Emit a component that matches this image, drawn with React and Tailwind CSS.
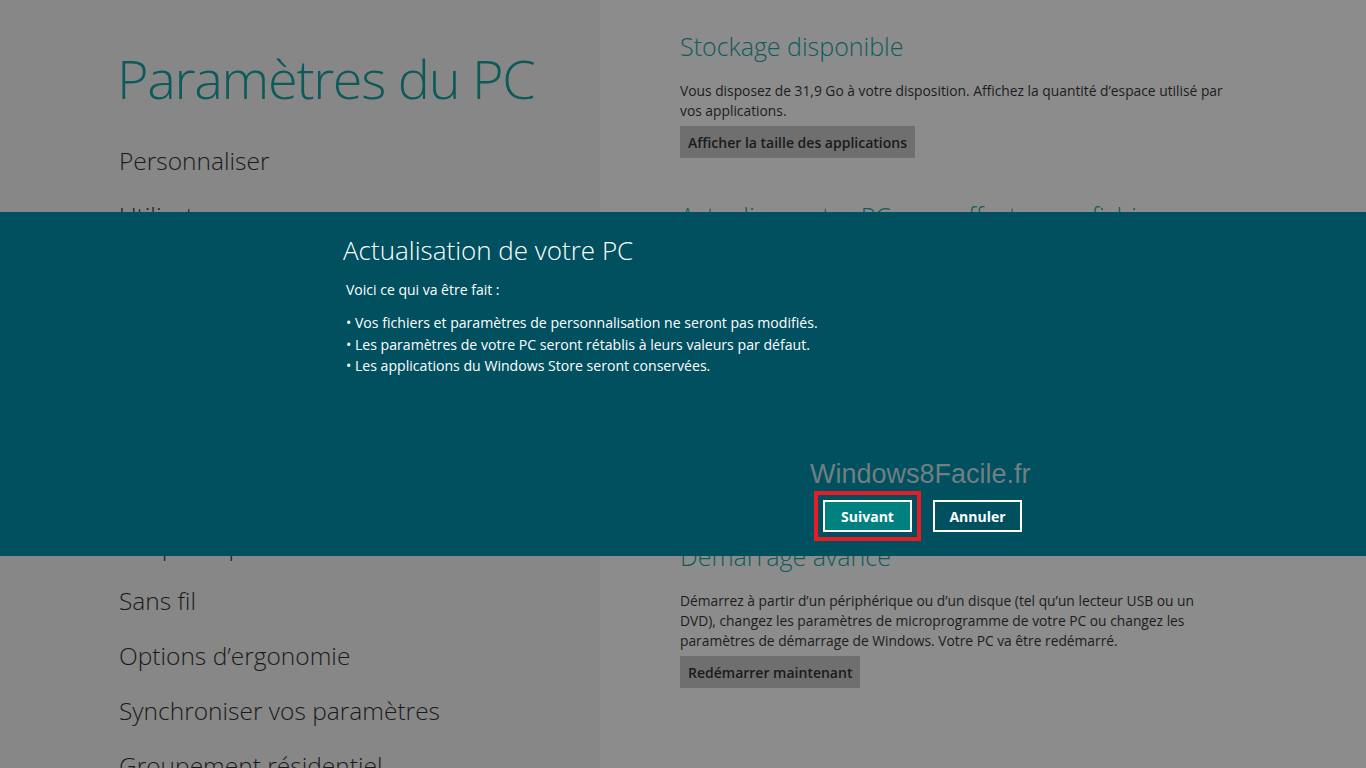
import React from 'react';

const navItems = [
  'Personnaliser',
  'Utilisateurs',
  'Notifications',
  'Rechercher',
  'Partager',
  'Général',
  'Confidentialité',
  'Périphériques',
  'Sans fil',
  'Options d’ergonomie',
  'Synchroniser vos paramètres',
  'Groupement résidentiel',
  'Windows Update',
];

const sections = [
  {
    title: 'Stockage disponible',
    lines: [
      'Vous disposez de 31,9 Go à votre disposition. Affichez la quantité d’espace utilisé par',
      'vos applications.',
    ],
    button: 'Afficher la taille des applications',
  },
  {
    title: 'Actualiser votre PC sans affecter vos fichiers',
    lines: [
      'Si votre PC ne fonctionne pas correctement, vous pouvez l’actualiser sans perdre vos',
      'photos, votre musique, vos vidéos et autres fichiers personnels.',
    ],
    button: 'Commencer',
  },
  {
    title: 'Tout supprimer et réinstaller Windows',
    lines: [
      'Si vous voulez recycler votre PC ou recommencer à zéro, vous pouvez le rétablir à ses',
      'paramètres d’usine.',
    ],
    button: 'Commencer',
  },
  {
    title: 'Démarrage avancé',
    lines: [
      'Démarrez à partir d’un périphérique ou d’un disque (tel qu’un lecteur USB ou un',
      'DVD), changez les paramètres de microprogramme de votre PC ou changez les',
      'paramètres de démarrage de Windows. Votre PC va être redémarré.',
    ],
    button: 'Redémarrer maintenant',
  },
];

const bullets = [
  'Vos fichiers et paramètres de personnalisation ne seront pas modifiés.',
  'Les paramètres de votre PC seront rétablis à leurs valeurs par défaut.',
  'Les applications du Windows Store seront conservées.',
];

const font = { fontFamily: '"Open Sans", "Noto Sans", sans-serif' };

const Section = ({ section }) => (
  <div className="mb-[42px]">
    <h2 className="text-[25px] leading-[32px] font-light text-[#0e5c5c]">{section.title}</h2>
    <p className="mt-[19px] text-[13.8px] leading-[20px] text-[#1c1c1c]">
      {section.lines.map((line, i) => (
        <span key={i} className="block whitespace-nowrap">{line}</span>
      ))}
    </p>
    <button className="mt-[5px] h-[32px] px-[8px] bg-[#6f6f6f] text-[14px] font-semibold text-[#1a1a1a]">
      {section.button}
    </button>
  </div>
);

export default function App() {
  return (
    <div style={font} className="relative w-[1366px] h-[768px] overflow-hidden flex">
      <div className="w-[600px] h-full bg-[#878787] pl-[117px] pt-[51px]">
        <h1 className="text-[54px] leading-none font-light tracking-[-1.3px] text-[#0c5a5a] whitespace-nowrap">
          Paramètres du PC
        </h1>
        <ul className="mt-[28px] pl-[2px]">
          {navItems.map((item) => (
            <li key={item} className="h-[55px] leading-[55px] text-[24.5px] font-light text-[#1a1a1a] whitespace-nowrap">
              {item}
            </li>
          ))}
        </ul>
      </div>

      <div className="flex-1 h-full bg-[#8c8c8c] pl-[80px] pt-[30px]">
        {sections.map((s) => (
          <Section key={s.title} section={s} />
        ))}
      </div>

      {/* boîte de dialogue */}
      <div className="absolute left-0 right-0 top-[212px] h-[344px] bg-[#00505f]">
        <div className="w-[680px] h-full mx-auto flex flex-col pt-[20px] pb-[15px] text-white">
          <h2 className="text-[26px] leading-[36px] font-light">Actualisation de votre PC</h2>
          <p className="mt-[12px] pl-[3px] text-[14px] leading-[20px]">Voici ce qui va être fait :</p>
          <ul className="mt-[12px] pl-[3px] text-[14.1px] leading-[21.5px]">
            {bullets.map((b) => (
              <li key={b}>• {b}</li>
            ))}
          </ul>
          <div className="mt-auto flex justify-end items-center gap-[12px] pr-[1px]">
            <div className="border-4 border-[#e81c24] p-[5px]">
              <button className="w-[89px] h-[32px] border-2 border-white bg-[#00817f] text-[14px] font-bold text-white">
                Suivant
              </button>
            </div>
            <button className="w-[89px] h-[32px] border-2 border-white bg-transparent text-[14px] font-bold text-white">
              Annuler
            </button>
          </div>
        </div>
      </div>

      <div
        className="absolute left-[810px] top-[461px] text-[27px] leading-none text-[#6f7f82] pointer-events-none"
        style={{ fontFamily: '"Liberation Sans", Arial, sans-serif' }}
      >
        Windows8Facile.fr
      </div>
    </div>
  );
}
